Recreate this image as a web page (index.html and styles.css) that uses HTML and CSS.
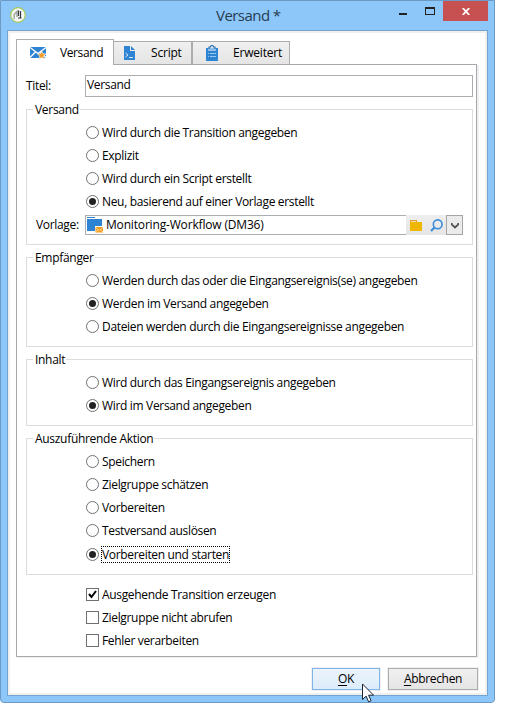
FILE: index.html
```html
<!DOCTYPE html>
<html lang="de">
<head>
<meta charset="utf-8">
<title>Versand</title>
<link rel="stylesheet" href="styles.css">
</head>
<body>
<div class="window">
  <header class="titlebar">
    <svg class="app-icon" width="16" height="16" viewBox="0 0 16 16"><circle cx="8" cy="8" r="7.300" fill="#f6f7f3" stroke="#a4c95c" stroke-width="1.200"/><path d="M4.200 12V7.500L7 4.500V10" fill="none" stroke="#a2a6a3" stroke-width="1.500"/><path d="M8.500 3.500V9M10.500 4v7.500M8 11h3.500" fill="none" stroke="#333b40" stroke-width="1.200"/></svg>
    <h1 class="title">Versand *</h1>
    <div class="controls">
      <svg width="60" height="20" viewBox="0 0 60 20" shape-rendering="crispEdges"><path d="M16 12h8v2h-8z" fill="#222"/><path d="M42 6h10v8H42zM43 8v5h8V8z" fill="#222" fill-rule="evenodd"/></svg>
      <div class="close"><svg width="8" height="7" viewBox="0 0 8 7"><path d="M.7 0L7.300 7M7.300 0L.7 7" stroke="#fff" stroke-width="1.800"/></svg></div>
    </div>
  </header>
  <main class="client">
    <nav class="tabs">
      <div class="tab active"><svg width="17" height="14" viewBox="0 0 17 14"><path d="M0 1h16v11H0z" fill="#2f83d3"/><path d="M0 1.500l8 6 8-6M0 11.500L5.500 6M10.500 6L16 11.500" fill="none" stroke="#fff" stroke-width="1.300"/><path d="M11.700 5l1.200 2.700 3.100.2-2.400 2 .8 3.300-2.700-1.700-2.700 1.700.8-3.300-2.400-2 3.100-.2z" fill="#f49a20" stroke="#fff" stroke-width=".6"/></svg><span>Versand</span></div>
      <div class="tab script"><svg width="11" height="14" viewBox="0 0 11 14"><path d="M0 0h6v5h5v9H0z" fill="#2f83d3"/><path d="M7 0l4 4H7z" fill="#2f83d3"/><path d="M1.500 7l2.500 2-2.500 2M5 11.500h4" fill="none" stroke="#d5e7f7"/></svg><span>Script</span></div>
      <div class="tab extended"><svg width="12" height="16" viewBox="0 0 12 16"><path d="M0 3h12v13H0z" fill="#2f83d3"/><path d="M2 3h8v3H2z" fill="#8fbfe9"/><path d="M3 4V2h1.500a1.500 1.500 0 0 1 3 0H9v2" fill="none" stroke="#246fb5" stroke-width="1.200"/><path d="M2 8.500h1M4 8.500h6M2 11.500h1M4 11.500h6" stroke="#9bc8ee"/></svg><span>Erweitert</span></div>
    </nav>
    <section class="panel">
      <div class="title-row"><label>Titel:</label><div class="input">Versand</div></div>

      <section class="group g1">
        <h2><span>Versand</span></h2>
        <div class="option"><i class="radio"></i><span>Wird durch die Transition angegeben</span></div>
        <div class="option"><i class="radio"></i><span>Explizit</span></div>
        <div class="option"><i class="radio"></i><span>Wird durch ein Script erstellt</span></div>
        <div class="option"><i class="radio on"></i><span>Neu, basierend auf einer Vorlage erstellt</span></div>
        <div class="template-row">
          <label>Vorlage:</label>
          <div class="combo">
            <svg width="17" height="16" viewBox="0 0 17 16"><path d="M0 0h8v1H0zM0 2h15v12H0z" fill="#2f83d3"/><path d="M8 9h9v7H8z" fill="#fff"/><path d="M8.500 10H16v5.500H8.500z" fill="#f29a1d"/><path d="M8.500 10.500l3.700 3 3.800-3M8.500 15l2.500-2M16 15l-2.500-2" fill="none" stroke="#ffe3b0" stroke-width=".8"/></svg>
            <span class="value">Monitoring-Workflow (DM36)</span>
            <div class="tools">
              <svg width="12" height="11" viewBox="0 0 12 11"><path d="M0 0h7v2h5v9H0z" fill="#efb700"/><path d="M0 0h7v2H0z" fill="#e39b2d"/><path d="M1 1h5v1H1z" fill="#f8dca8"/></svg>
              <svg width="13" height="13" viewBox="0 0 13 13"><circle cx="7.700" cy="5.300" r="4.400" fill="none" stroke="#3b8cdb" stroke-width="1.600"/><path d="M4.500 8.500L1 12" stroke="#3b8cdb" stroke-width="2.200"/></svg>
            </div>
            <div class="arrow"><svg width="8" height="7" viewBox="0 0 8 7"><path d="M.7 1v1.500L4 5.500l3.300-3V1" fill="none" stroke="#505050" stroke-width="1.800"/></svg></div>
          </div>
        </div>
      </section>

      <section class="group g2">
        <h2><span>Empfänger</span></h2>
        <div class="option"><i class="radio"></i><span>Werden durch das oder die Eingangsereignis(se) angegeben</span></div>
        <div class="option"><i class="radio on"></i><span>Werden im Versand angegeben</span></div>
        <div class="option"><i class="radio"></i><span>Dateien werden durch die Eingangsereignisse angegeben</span></div>
      </section>

      <section class="group g3">
        <h2><span>Inhalt</span></h2>
        <div class="option"><i class="radio"></i><span>Wird durch das Eingangsereignis angegeben</span></div>
        <div class="option"><i class="radio on"></i><span>Wird im Versand angegeben</span></div>
      </section>

      <section class="group g4">
        <h2><span>Auszuführende Aktion</span></h2>
        <div class="option"><i class="radio"></i><span>Speichern</span></div>
        <div class="option"><i class="radio"></i><span>Zielgruppe schätzen</span></div>
        <div class="option"><i class="radio"></i><span>Vorbereiten</span></div>
        <div class="option"><i class="radio"></i><span>Testversand auslösen</span></div>
        <div class="option last"><i class="radio on"></i><span class="focused">Vorbereiten und starten</span></div>
      </section>

      <div class="checks">
        <div class="option"><i class="check"><svg width="11" height="11" viewBox="0 0 11 11"><path d="M2 5l2.500 3L9 2" fill="none" stroke="#000" stroke-width="2"/></svg></i><span>Ausgehende Transition erzeugen</span></div>
        <div class="option"><i class="check"></i><span>Zielgruppe nicht abrufen</span></div>
        <div class="option"><i class="check"></i><span>Fehler verarbeiten</span></div>
      </div>
    </section>
    <footer class="buttons">
      <div class="button ok"><span><u>O</u>K</span></div>
      <div class="button cancel"><span><u>A</u>bbrechen</span></div>
    </footer>
  </main>
  <svg class="cursor" width="12" height="20" viewBox="0 0 12 20"><path d="M.5 1v15.500l3.600-3.400 2.500 5.700 2.500-1.100-2.500-5.500h5z" fill="#fff" stroke="#1b2430"/></svg>
</div>
</body>
</html>
```

FILE: styles.css
```css
* { box-sizing: border-box; }
body {
  margin: 0;
  background: #fff;
  color: #000;
  font: 12px/16px "Open Sans", "Noto Sans", sans-serif;
  letter-spacing: -0.33px;
  white-space: nowrap;
  overflow: hidden;
}
h1, h2 { margin: 0; font-weight: 400; }
i { font-style: normal; }
svg { display: block; flex: none; }

.window {
  position: relative;
  width: 495px;
  height: 703px;
  padding: 0 6px 6px;
  border: 1px solid #6b9ac6;
  border-radius: 0 0 4px 4px;
  background: #8dc7fa;
}
.titlebar { display: flex; height: 29px; }
.app-icon { margin: 6px 0 0 3px; }
.title {
  flex: 1;
  padding: 3px 0 0 190px;
  font-size: 15px;
  line-height: 22px;
  letter-spacing: -0.55px;
  color: #263c50;
}
.controls { display: flex; }
.close {
  display: flex;
  align-items: center;
  justify-content: center;
  width: 45px;
  height: 20px;
  background: #c75050;
}

.client {
  width: 481px;
  height: 666px;
  padding: 5px 7px 0 6px;
  border: 1px solid #71a3d3;
  box-shadow: inset 0 0 0 2px #f0f0f0;
  background: #fff;
}
.tabs { display: flex; align-items: flex-end; height: 28px; padding: 2px 0 0 2px; }
.tab {
  display: flex;
  align-items: center;
  width: 98px;
  height: 23px;
  border: 1px solid #acacac;
  border-bottom: 0;
  background: linear-gradient(#f0f0f0, #e5e5e5);
}
.active {
  position: relative;
  z-index: 1;
  height: 26px;
  margin-bottom: -1px;
  padding-left: 13px;
  background: #fff;
}
.active span { margin-left: 13px; }
.script { width: 78px; padding-left: 10px; border-left: 0; }
.script span { margin-left: 16px; }
.extended { padding-left: 13px; }
.extended span { margin-left: 15px; }
.tab span { letter-spacing: -0.2px; }
.active span { letter-spacing: -0.4px; }

.panel {
  width: 461px;
  height: 593px;
  margin-left: 2px;
  padding: 10px 3px 0 9px;
  border: 1px solid #a5a8ad;
  box-shadow: 2px 1px 0 #f0f0f0;
}
.title-row { display: flex; align-items: center; height: 22px; }
.title-row label { width: 59px; }
.input {
  width: 388px;
  height: 22px;
  padding: 1px;
  border: 1px solid #abadb3;
}
.group { width: 447px; border: 1px solid #dcdcdc; }
.group h2 { height: 11px; padding-left: 6px; font-size: 12px; line-height: 16px; letter-spacing: -0.3px; }
.group h2 span { position: relative; top: -8px; padding: 0 1px 0 2px; background: #fff; }
.g1 { height: 136px; margin-top: 12px; }
.g2 { height: 90px; margin-top: 12px; }
.g3 { height: 67px; margin-top: 12px; }
.g4 { height: 137px; margin-top: 12px; }
.option { display: flex; align-items: center; height: 23px; padding-left: 59px; }
.option span { margin-left: 3px; }
.last { margin-top: 1px; }
.option .focused { margin-left: 2px; height: 17px; border: 1px dotted #000; line-height: 15px; }
.radio {
  display: flex;
  width: 13px;
  height: 13px;
  border: 1px solid #707070;
  border-radius: 50%;
}
.on::after { content: ""; width: 7px; height: 7px; margin: 2px; border-radius: 50%; background: #222; }
.check { width: 13px; height: 13px; border: 1px solid #707070; }
.checks { padding: 8px 0 0 1px; }

.template-row { display: flex; align-items: center; height: 20px; margin-top: 2px; padding-left: 9px; }
.template-row label { width: 49px; }
.combo {
  display: flex;
  align-items: center;
  width: 378px;
  height: 20px;
  border: 1px solid #abadb3;
}
.combo > svg { margin-left: 1px; }
.value { flex: 1; margin-left: 2px; letter-spacing: -0.17px; }
.tools {
  display: flex;
  align-items: center;
  gap: 8px;
  width: 40px;
  height: 20px;
  padding-left: 4px;
  background: linear-gradient(#eee, #e5e5e5);
}
.arrow {
  display: flex;
  align-items: center;
  justify-content: center;
  width: 17px;
  height: 20px;
  margin-right: -1px;
  border: 1px solid #a5a5a5;
  background: #ebebeb;
}

.buttons { display: flex; justify-content: flex-end; gap: 8px; margin-top: 11px; padding-right: 2px; }
.button {
  display: flex;
  align-items: center;
  justify-content: center;
  height: 22px;
  border: 1px solid #acacac;
  box-shadow: 0 0 0 1px #f0f0f0;
  background: linear-gradient(#f0f0f0, #e5e5e5);
}
u { text-underline-offset: 2px; }
.ok { width: 68px; border-color: #7eb4ea; background: linear-gradient(#ecf4fc, #dcecfc); }
.cancel { width: 90px; }
.cursor { position: absolute; left: 361px; top: 682px; }
```
